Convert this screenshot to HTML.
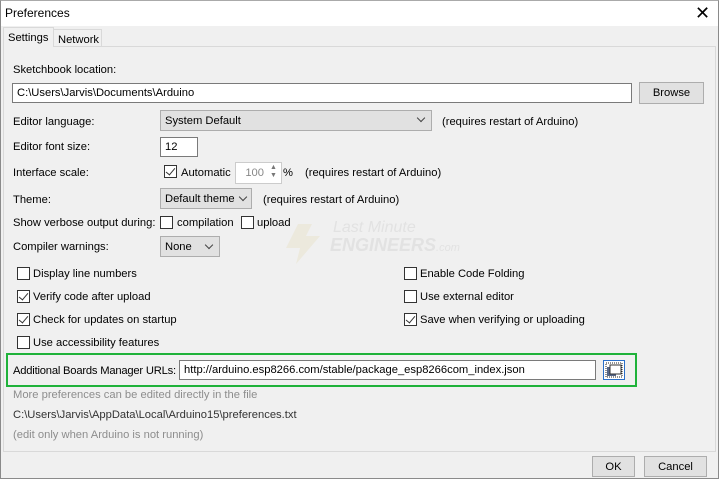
<!DOCTYPE html>
<html><head><style>
*{box-sizing:border-box}
body{margin:0;width:719px;height:479px;overflow:hidden;font-family:"Liberation Sans",sans-serif;font-size:11.2px;line-height:16px;color:#000;background:#f0f0f0;position:relative}
.a{position:absolute;white-space:nowrap}
.win{position:absolute;left:0;top:0;width:719px;height:479px;border:1px solid #8a8a8a;border-top:1px solid #aaa}
.title{left:1px;top:1px;width:717px;height:25px;background:#fff}
.inp{position:absolute;background:#fff;border:1px solid #7a7a7a;padding:1px 0 0 4px;height:21px;white-space:nowrap;overflow:hidden}
.btn{position:absolute;background:#e1e1e1;border:1px solid #adadad;text-align:center;padding-top:2px}
.cb{position:absolute;width:13px;height:13px;border:1px solid #333;background:#fff}
.ck::after{content:"";position:absolute;left:3px;top:0px;width:4px;height:8px;border:solid #333;border-width:0 1.5px 1.5px 0;transform:rotate(40deg)}
.sel{position:absolute;background:#e1e1e1;border:1px solid #adadad;padding:2px 0 0 4px;height:21px}
.chev{position:absolute;width:6px;height:6px;border:solid #444;border-width:0 1px 1px 0;transform:rotate(45deg)}
.g{color:#8d8d8d}
</style></head><body>
<div class="win"></div>
<div class="a title"></div>
<div class="a" style="left:5px;top:5px;font-size:12px">Preferences</div>
<div class="a" style="left:695px;top:3px;font-size:18px;font-weight:300;line-height:20px">✕</div>
<div class="a" style="left:3px;top:46px;width:713px;height:406px;border:1px solid #d9d9d9;background:#f0f0f0"></div>
<div class="a" style="left:3px;top:27px;width:51px;height:20px;background:#f0f0f0;border:1px solid #d9d9d9;border-bottom:none"></div>
<div class="a" style="left:8px;top:30px">Settings</div>
<div class="a" style="left:54px;top:29px;width:48px;height:18px;background:#f0f0f0;border:1px solid #d9d9d9;border-left:none"></div>
<div class="a" style="left:58px;top:32px">Network</div>

<div class="a" style="left:13px;top:62px">Sketchbook location:</div>
<div class="inp" style="left:12px;top:83px;width:620px;height:20px">C:\Users\Jarvis\Documents\Arduino</div>
<div class="btn" style="left:639px;top:82px;width:65px;height:22px">Browse</div>

<div class="a" style="left:13px;top:114px">Editor language:</div>
<div class="sel" style="left:160px;top:110px;width:272px">System Default</div><div class="chev" style="left:418px;top:115px"></div>
<div class="a" style="left:442px;top:114px">(requires restart of Arduino)</div>

<div class="a" style="left:13px;top:139px">Editor font size:</div>
<div class="inp" style="left:160px;top:137px;width:38px;height:20px">12</div>

<div class="a" style="left:13px;top:165px">Interface scale:</div>
<div class="cb ck" style="left:164px;top:165px"></div>
<div class="a" style="left:181px;top:165px">Automatic</div>
<div class="inp" style="left:235px;top:162px;width:47px;height:22px;border-color:#ccc;color:#888;text-align:right;padding-right:17px;padding-top:2px">100</div>
<div class="a" style="left:270px;top:164px;font-size:7px;color:#777;line-height:8px">▲<br>▼</div>
<div class="a" style="left:283px;top:165px">%</div>
<div class="a" style="left:305px;top:165px">(requires restart of Arduino)</div>

<div class="a" style="left:13px;top:192px">Theme:</div>
<div class="sel" style="left:160px;top:188px;width:92px">Default theme</div><div class="chev" style="left:240px;top:194px"></div>
<div class="a" style="left:263px;top:192px">(requires restart of Arduino)</div>

<div class="a" style="left:13px;top:215px">Show verbose output during:</div>
<div class="cb" style="left:160px;top:216px"></div><div class="a" style="left:177px;top:215px">compilation</div>
<div class="cb" style="left:241px;top:216px"></div><div class="a" style="left:257px;top:215px">upload</div>

<svg class="a" style="left:282px;top:222px" width="42" height="44" viewBox="0 0 42 44"><path d="M16 2 L4 26 L18 26 L14 42 L38 14 L24 14 L30 2 Z" fill="#ece9dd"/></svg>
<div class="a" style="left:333px;top:218px;font-size:16px;line-height:20px;color:#e2e2e2;font-style:italic">Last Minute</div>
<div class="a" style="left:330px;top:234px;font-size:18px;line-height:22px;color:#e2e2e2;font-style:italic;font-weight:bold">ENGINEERS<span style="font-size:11px;font-weight:normal">.com</span></div>

<div class="a" style="left:13px;top:239px">Compiler warnings:</div>
<div class="sel" style="left:160px;top:236px;width:60px">None</div><div class="chev" style="left:206px;top:242px"></div>

<div class="cb" style="left:17px;top:267px"></div><div class="a" style="left:33px;top:266px">Display line numbers</div>
<div class="cb ck" style="left:17px;top:290px"></div><div class="a" style="left:33px;top:289px">Verify code after upload</div>
<div class="cb ck" style="left:17px;top:313px"></div><div class="a" style="left:33px;top:312px">Check for updates on startup</div>
<div class="cb" style="left:17px;top:336px"></div><div class="a" style="left:33px;top:335px">Use accessibility features</div>

<div class="cb" style="left:404px;top:267px"></div><div class="a" style="left:420px;top:266px">Enable Code Folding</div>
<div class="cb" style="left:404px;top:290px"></div><div class="a" style="left:420px;top:289px">Use external editor</div>
<div class="cb ck" style="left:404px;top:313px"></div><div class="a" style="left:420px;top:312px">Save when verifying or uploading</div>

<div class="a" style="left:6px;top:353px;width:631px;height:34px;border:2px solid #1fb23a"></div>
<div class="a" style="left:13px;top:363px;letter-spacing:-0.2px">Additional Boards Manager URLs:</div>
<div class="inp" style="left:179px;top:360px;width:417px;height:20px">http://arduino.esp8266.com/stable/package_esp8266com_index.json</div>
<div class="a" style="left:603px;top:360px;width:22px;height:20px;border:1px solid #2a6fc9;background:#fff">
<svg width="20" height="18" viewBox="0 0 20 18"><rect x="2" y="2" width="16" height="14" fill="none" stroke="#222" stroke-dasharray="1 1"/><rect x="3" y="6" width="9" height="9" fill="#556688"/><rect x="6" y="4" width="11" height="9" fill="#fff" stroke="#333"/></svg></div>

<div class="a g" style="left:13px;top:387px">More preferences can be edited directly in the file</div>
<div class="a" style="left:13px;top:407px;color:#333">C:\Users\Jarvis\AppData\Local\Arduino15\preferences.txt</div>
<div class="a g" style="left:13px;top:427px">(edit only when Arduino is not running)</div>

<div class="btn" style="left:592px;top:456px;width:43px;height:21px">OK</div>
<div class="btn" style="left:644px;top:456px;width:63px;height:21px">Cancel</div>
</body></html>
